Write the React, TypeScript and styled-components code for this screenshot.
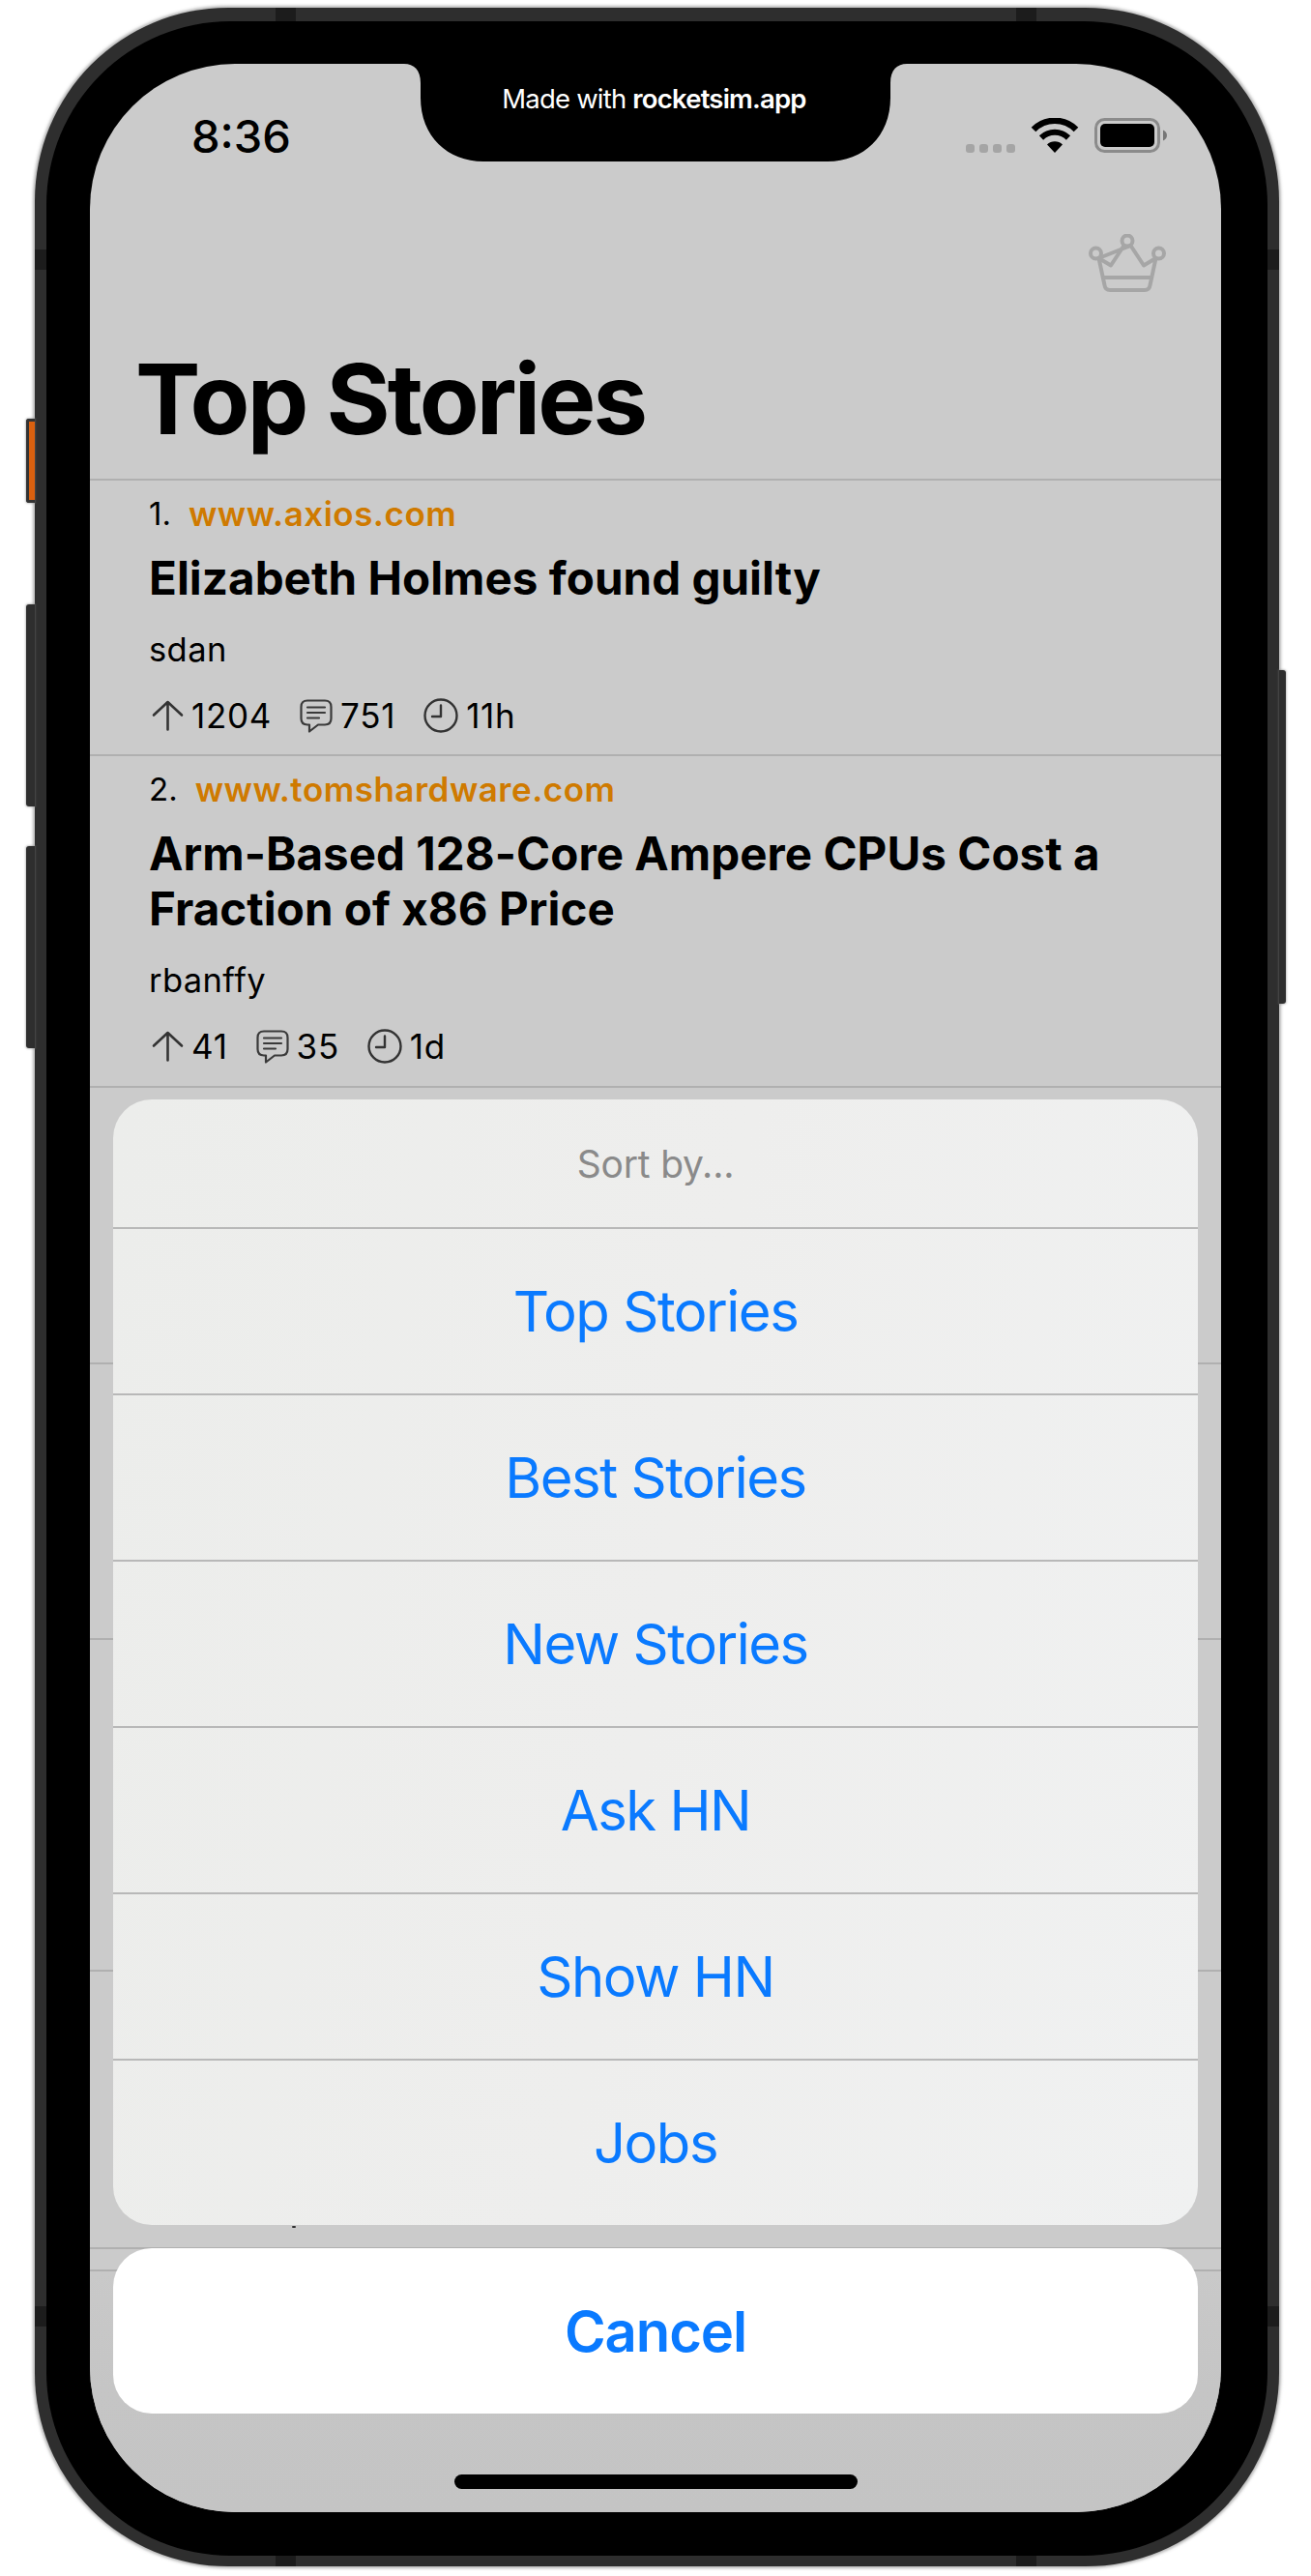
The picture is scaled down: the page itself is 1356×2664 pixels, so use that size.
import React from "react";
import styled, { createGlobalStyle } from "styled-components";

const GlobalStyle = createGlobalStyle`
  html, body {
    margin: 0;
    padding: 0;
    background: #fff;
    font-family: Inter, "Liberation Sans", sans-serif;
  }
`;

const Page = styled.div`
  width: 1356px;
  height: 2664px;
  box-sizing: border-box;
  padding: 8px 0 0 36px;
  overflow: hidden;
`;

const Shell = styled.div`
  position: relative;
  width: 1287px;
  height: 2646px;
  box-sizing: border-box;
  padding: 14px 12px 11px 12px;
  background: #2e2e2e;
  border-radius: 200px;
  box-shadow: 0 0 3px 2px rgba(110, 110, 110, 0.5);
`;

const Bezel = styled.div`
  height: 100%;
  box-sizing: border-box;
  padding: 44px 48px 45px 45px;
  background: #000;
  border-radius: 190px;
`;

const Screen = styled.div`
  position: relative;
  display: flex;
  flex-direction: column;
  width: 1170px;
  height: 2532px;
  overflow: hidden;
  background: #cbcbcb;
  color: #000;
  border-radius: 150px;
`;

const SideButton = styled.div<{ $side: "left" | "right"; $top: number; $height: number; $accent?: boolean }>`
  position: absolute;
  top: ${(p) => p.$top}px;
  ${(p) => (p.$side === "left" ? "left: -9px;" : "right: -7px;")}
  width: ${(p) => (p.$side === "left" ? 9 : 7)}px;
  height: ${(p) => p.$height}px;
  box-sizing: border-box;
  background: ${(p) => (p.$accent ? "#d9600f" : "#2e2e2e")};
  border: ${(p) => (p.$accent ? "3px solid #333" : "0")};
  border-right: 0;
  border-radius: ${(p) => (p.$side === "left" ? "3px 0 0 3px" : "0 3px 3px 0")};
  box-shadow: 0 0 2px 1px rgba(120, 120, 120, 0.4);
`;

const Antenna = styled.div<{ $x?: number; $y?: number; $edge: "top" | "bottom" | "left" | "right" }>`
  position: absolute;
  background: #1c1c1c;
  ${(p) =>
    p.$edge === "top" || p.$edge === "bottom"
      ? `left: ${p.$x}px; width: 21px; height: ${p.$edge === "top" ? 14 : 11}px; ${p.$edge}: 0;`
      : `top: ${p.$y}px; height: 21px; width: 12px; ${p.$edge}: 0;`}
`;

const Notch = styled.div`
  position: absolute;
  top: 0;
  left: 325px;
  width: 520px;
  height: 101px;
  display: flex;
  justify-content: center;
  z-index: 3;

  svg {
    position: absolute;
    inset: 0;
  }
`;

const NotchLabel = styled.div`
  position: relative;
  margin: 19px 3px 0 0;
  color: #fff;
  font-size: 27.5px;
  line-height: 34px;
  letter-spacing: -0.8px;
  white-space: nowrap;

  b {
    font-weight: 600;
  }
`;

const StatusBar = styled.div`
  flex: none;
  height: 124px;
  box-sizing: border-box;
  padding: 53px 55px 0 105px;
  display: flex;
  justify-content: space-between;
  align-items: flex-start;
`;

const Time = styled.div`
  font-size: 47px;
  line-height: 44px;
  font-weight: 500;
`;

const StatusIcons = styled.div`
  display: flex;
  align-items: flex-end;
  padding-top: 3px;
  height: 36px;
`;

const SignalDots = styled.div`
  display: flex;
  gap: 5px;
  margin-right: 16px;
`;

const SignalDot = styled.span`
  width: 9px;
  height: 9px;
  border-radius: 3px;
  background: #a5a5a5;
`;

const NavBar = styled.div`
  flex: none;
  height: 305px;
  box-sizing: border-box;
  display: flex;
  flex-direction: column;
  padding: 52px 57px 0 47px;
`;

const CrownButton = styled.div`
  align-self: flex-end;
  height: 60px;
`;

const LargeTitle = styled.h1`
  margin: 54px 0 0;
  font-size: 101px;
  line-height: 112px;
  font-weight: 700;
  letter-spacing: -2.9px;
`;

const List = styled.div`
  flex: none;
`;

const StoryRow = styled.div<{ $height: number }>`
  height: ${(p) => p.$height}px;
  box-sizing: border-box;
  padding: 14px 40px 0 61px;
  border-top: 2px solid #b0b0b0;
`;

const MetaLine = styled.div`
  display: flex;
  align-items: center;
  gap: 18px;
  height: 40px;
  font-size: 33px;
`;

const Domain = styled.span`
  color: #cf7a00;
  font-weight: 600;
  font-size: 35px;
  letter-spacing: 0.5px;
`;

const StoryTitle = styled.div`
  margin-top: 18px;
  font-size: 47.5px;
  line-height: 57px;
  font-weight: 700;
  letter-spacing: 0.05px;
`;

const Author = styled.div`
  margin-top: 26px;
  font-size: 34.5px;
  line-height: 40px;
  letter-spacing: 0.4px;
`;

const Stats = styled.div`
  display: flex;
  align-items: center;
  gap: 29px;
  margin-top: 28px;
  height: 40px;
  font-size: 35px;
  letter-spacing: 0.7px;
`;

const Stat = styled.div`
  display: flex;
  align-items: center;
  gap: 8px;
`;

const HiddenRow = styled.div<{ $height: number }>`
  position: relative;
  height: ${(p) => p.$height}px;
  box-sizing: border-box;
  border-top: 2px solid #b0b0b0;
`;

const Speck = styled.span`
  position: absolute;
  left: 209px;
  top: 263px;
  width: 4px;
  height: 2px;
  border-radius: 1px;
  background: #333;
`;

const TabBar = styled.div`
  flex: 1;
  border-top: 2px solid #b0b0b0;
  background: linear-gradient(#c9c9c9, #c5c5c5 120px, #c4c4c4);
`;

const Sheet = styled.div`
  position: absolute;
  left: 24px;
  right: 24px;
  bottom: 102px;
  display: flex;
  flex-direction: column;
  gap: 24px;
  z-index: 2;
`;

const ActionGroup = styled.div`
  border-radius: 40px;
  overflow: hidden;
  background: linear-gradient(100deg, #ecedeb, #eeeeed 50%, #f0f1f1);
`;

const SheetHeader = styled.div`
  height: 132px;
  display: flex;
  align-items: center;
  justify-content: center;
  font-size: 39px;
  color: #8a8a8a;
  letter-spacing: -0.2px;
`;

const ActionRow = styled.div`
  height: 172px;
  box-sizing: border-box;
  display: flex;
  align-items: center;
  justify-content: center;
  border-top: 2px solid #b8b8b8;
  font-size: 58px;
  color: #0a7aff;
  letter-spacing: -1.5px;
`;

const CancelButton = styled.div`
  height: 171px;
  display: flex;
  align-items: center;
  justify-content: center;
  background: #fff;
  border-radius: 40px;
  font-size: 58px;
  font-weight: 600;
  color: #0a7aff;
  letter-spacing: -1.1px;
`;

const HomeIndicator = styled.div`
  position: absolute;
  left: 377px;
  bottom: 24px;
  width: 417px;
  height: 15px;
  border-radius: 8px;
  background: #000;
  z-index: 2;
`;

const NotchShape = () => (
  <svg width="520" height="101" viewBox="0 0 520 101">
    <path
      d="M0 0H520C510 0 503 6 503 20V35C503 75 475 101 438 101H82C45 101 17 75 17 35V20C17 6 10 0 0 0Z"
      fill="#000"
    />
  </svg>
);

const WifiSvg = styled.svg`
  margin-right: 16px;
`;

const WifiIcon = () => (
  <WifiSvg width="50" height="36" viewBox="0 0 50 36">
    <path d="M3 12A31 31 0 0 1 47 12" fill="none" stroke="#000" strokeWidth="6.5" />
    <path d="M11 20.5A20 20 0 0 1 39 20.5" fill="none" stroke="#000" strokeWidth="6" />
    <path d="M17 27.5A11.5 11.5 0 0 1 33 27.5L25 36Z" fill="#000" />
  </WifiSvg>
);

const BatteryIcon = () => (
  <svg width="76" height="36" viewBox="0 0 76 36">
    <rect x="1.5" y="1.5" width="65" height="33" rx="9" fill="none" stroke="#8b8b8b" strokeWidth="3" />
    <rect x="6" y="6" width="56" height="24" rx="5" fill="#000" />
    <path d="M71 12.5C73.5 13.5 75 15.5 75 18S73.5 22.5 71 23.5Z" fill="#777" />
  </svg>
);

const CrownIcon = () => (
  <svg width="80" height="60" viewBox="0 0 80 60" fill="none" stroke="#a6a6a6" strokeWidth="4" strokeLinejoin="round" strokeLinecap="round">
    <circle cx="40" cy="7" r="5.5" />
    <circle cx="7.5" cy="20" r="5.5" />
    <circle cx="72.5" cy="20" r="5.5" />
    <path d="M10.5 25L23 32.5L36.5 12M43.5 12L57 32.5L69.5 25L63.5 53C63 56.5 61 58 58 58H22C19 58 17 56.5 16.5 53L10.5 25Z" />
    <path d="M15 45H65" />
  </svg>
);

const ArrowSvg = styled.svg`
  margin-left: 3px;
`;

const ArrowIcon = () => (
  <ArrowSvg width="33" height="32" viewBox="0 0 33 32" fill="none" stroke="#333" strokeWidth="2.6" strokeLinecap="round" strokeLinejoin="round">
    <path d="M16.5 30.5V2M2 15.5L16.5 2L31 15.5" />
  </ArrowSvg>
);

const CommentIcon = () => (
  <svg width="34" height="35" viewBox="0 0 34 35" fill="none" stroke="#3a3a3a" strokeWidth="2.2" strokeLinecap="round" strokeLinejoin="round">
    <path d="M8 1.5H26C30 1.5 32.5 4 32.5 8V20C32.5 24 30 26.5 26 26.5H19L10 33.5V26.5H8C4 26.5 1.5 24 1.5 20V8C1.5 4 4 1.5 8 1.5Z" />
    <path d="M8 8.5H26M8 14H26M8 19.5H20" />
  </svg>
);

const ClockIcon = () => (
  <svg width="36" height="36" viewBox="0 0 36 36" fill="none" stroke="#333" strokeWidth="2.4" strokeLinecap="round" strokeLinejoin="round">
    <circle cx="18" cy="18" r="16.5" />
    <path d="M18 7.5V19H9" />
  </svg>
);

const stories = [
  {
    rank: 1,
    domain: "www.axios.com",
    title: "Elizabeth Holmes found guilty",
    author: "sdan",
    points: 1204,
    comments: 751,
    age: "11h",
    height: 285,
  },
  {
    rank: 2,
    domain: "www.tomshardware.com",
    title: "Arm-Based 128-Core Ampere CPUs Cost a Fraction of x86 Price",
    author: "rbanffy",
    points: 41,
    comments: 35,
    age: "1d",
    height: 343,
  },
];

const sortOptions = ["Top Stories", "Best Stories", "New Stories", "Ask HN", "Show HN", "Jobs"];

export default function App() {
  return (
    <Page>
      <GlobalStyle />
      <Shell>
        <SideButton $side="left" $top={425} $height={87} $accent />
        <SideButton $side="left" $top={617} $height={209} />
        <SideButton $side="left" $top={867} $height={209} />
        <SideButton $side="right" $top={685} $height={345} />
        <Antenna $edge="top" $x={249} />
        <Antenna $edge="top" $x={1015} />
        <Antenna $edge="bottom" $x={249} />
        <Antenna $edge="bottom" $x={1015} />
        <Antenna $edge="left" $y={250} />
        <Antenna $edge="right" $y={250} />
        <Antenna $edge="left" $y={2377} />
        <Antenna $edge="right" $y={2377} />
        <Bezel>
          <Screen>
            <Notch>
              <NotchShape />
              <NotchLabel>
                Made with <b>rocketsim.app</b>
              </NotchLabel>
            </Notch>
            <StatusBar>
              <Time>8:36</Time>
              <StatusIcons>
                <SignalDots>
                  <SignalDot />
                  <SignalDot />
                  <SignalDot />
                  <SignalDot />
                </SignalDots>
                <WifiIcon />
                <BatteryIcon />
              </StatusIcons>
            </StatusBar>
            <NavBar>
              <CrownButton>
                <CrownIcon />
              </CrownButton>
              <LargeTitle>Top Stories</LargeTitle>
            </NavBar>
            <List>
              {stories.map((s) => (
                <StoryRow key={s.rank} $height={s.height}>
                  <MetaLine>
                    <span>{s.rank}.</span>
                    <Domain>{s.domain}</Domain>
                  </MetaLine>
                  <StoryTitle>{s.title}</StoryTitle>
                  <Author>{s.author}</Author>
                  <Stats>
                    <Stat>
                      <ArrowIcon />
                      {s.points}
                    </Stat>
                    <Stat>
                      <CommentIcon />
                      {s.comments}
                    </Stat>
                    <Stat>
                      <ClockIcon />
                      {s.age}
                    </Stat>
                  </Stats>
                </StoryRow>
              ))}
              <HiddenRow $height={286} />
              <HiddenRow $height={285} />
              <HiddenRow $height={343} />
              <HiddenRow $height={287}>
                <Speck />
              </HiddenRow>
              <HiddenRow $height={23} />
            </List>
            <TabBar />
            <Sheet>
              <ActionGroup>
                <SheetHeader>Sort by...</SheetHeader>
                {sortOptions.map((o) => (
                  <ActionRow key={o}>{o}</ActionRow>
                ))}
              </ActionGroup>
              <CancelButton>Cancel</CancelButton>
            </Sheet>
            <HomeIndicator />
          </Screen>
        </Bezel>
      </Shell>
    </Page>
  );
}
